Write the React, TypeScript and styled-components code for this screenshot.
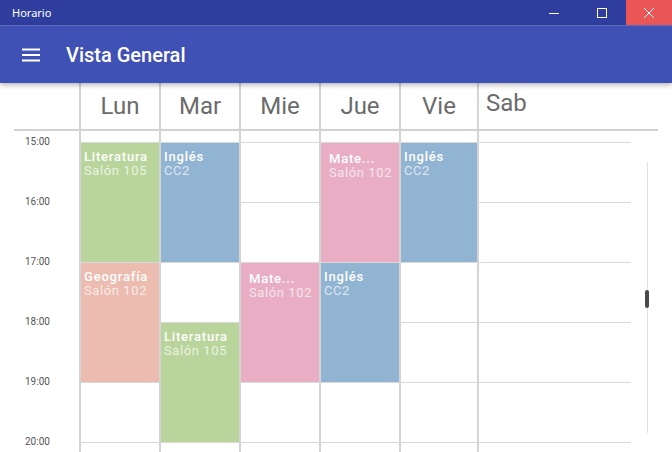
import styled, { createGlobalStyle } from "styled-components";

const GRID_COLUMNS = "79px 80px 80px 80px 80px 78px 1fr";

const GlobalStyle = createGlobalStyle`
  html, body {
    margin: 0;
    padding: 0;
    background: #ffffff;
  }
  body {
    font-family: Roboto, "Noto Sans", sans-serif;
    overflow: hidden;
  }
`;

const Window = styled.div`
  width: 672px;
  height: 452px;
  display: flex;
  flex-direction: column;
  overflow: hidden;
  background: #ffffff;
`;

const TitleBar = styled.div`
  height: 25px;
  flex-shrink: 0;
  display: flex;
  align-items: center;
  background: #2f3e9e;
  border-bottom: 1px solid #6472c6;
  color: #ffffff;
`;

const WindowTitle = styled.div`
  flex: 1;
  padding-left: 12px;
  font-family: "Noto Sans", "Open Sans", sans-serif;
  font-size: 11px;
`;

const WindowButton = styled.div<{ $width: number; $danger?: boolean }>`
  width: ${(p) => p.$width}px;
  height: 25px;
  display: flex;
  align-items: center;
  justify-content: center;
  background: ${(p) => (p.$danger ? "#ea5656" : "transparent")};
`;

const AppBar = styled.header`
  position: relative;
  z-index: 1;
  height: 57px;
  flex-shrink: 0;
  display: flex;
  align-items: center;
  gap: 26px;
  padding-left: 22px;
  background: #3f51b5;
  color: #ffffff;
  box-shadow: 0 2px 5px rgba(0, 0, 0, 0.3);
`;

const AppTitle = styled.h1`
  margin: 0;
  font-size: 20px;
  font-weight: 500;
  line-height: 24px;
`;

const Body = styled.main`
  flex: 1;
  display: flex;
  flex-direction: column;
`;

const ColumnsRow = styled.div<{ $height: number }>`
  display: grid;
  grid-template-columns: ${GRID_COLUMNS};
  height: ${(p) => p.$height}px;
  flex-shrink: 0;
`;

const DayCell = styled.div<{ $left?: boolean }>`
  border-left: 2px solid #d4d4d4;
  font-size: 24px;
  line-height: 28px;
  color: #6b6b6b;
  text-align: ${(p) => (p.$left ? "left" : "center")};
  padding: ${(p) => (p.$left ? "6px 0 0 7px" : "9px 0 0")};
`;

const ColumnLine = styled.div`
  border-left: 2px solid #d4d4d4;
`;

const Divider = styled.div`
  height: 2px;
  width: 644px;
  margin-left: 14px;
  flex-shrink: 0;
  background: #d2d2d2;
`;

const Content = styled.div`
  display: flex;
  flex-shrink: 0;
`;

const ScheduleGrid = styled.div`
  flex: 0 0 631px;
  display: grid;
  grid-template-columns: ${GRID_COLUMNS};
  grid-template-rows: repeat(6, 60px);
`;

const TimeLabel = styled.div<{ $row: number }>`
  grid-column: 1;
  grid-row: ${(p) => p.$row};
  margin-top: -6px;
  padding-left: 25px;
  font-size: 10px;
  line-height: 12px;
  color: #555555;
`;

const Slot = styled.div<{ $col: number; $row: number; $span: number }>`
  grid-column: ${(p) => p.$col};
  grid-row: ${(p) => p.$row} / span ${(p) => p.$span};
  border-left: 2px solid #d4d4d4;
  border-top: 1px solid #d9d9d9;
`;

const Lesson = styled.div<{ $color: string; $inset?: boolean }>`
  height: 100%;
  box-sizing: border-box;
  padding: ${(p) => (p.$inset ? "9px 0 0 8px" : "7px 3px 0")};
  background: ${(p) => p.$color};
  overflow: hidden;
`;

const LessonTitle = styled.div`
  font-size: 13px;
  line-height: 14px;
  font-weight: 500;
  letter-spacing: 0.8px;
  color: #ffffff;
  white-space: nowrap;
`;

const LessonRoom = styled.div`
  font-size: 13px;
  line-height: 14px;
  letter-spacing: 0.6px;
  color: rgba(255, 255, 255, 0.72);
  white-space: nowrap;
`;

const ScrollRail = styled.div`
  width: 4px;
  height: 271px;
  margin: 20px 0 0 14px;
  display: flex;
  flex-direction: column;
  background: linear-gradient(
    to right,
    transparent 2px,
    #e2e2e2 2px,
    #e2e2e2 3px,
    transparent 3px
  );
`;

const ScrollThumb = styled.div<{ $offset: number }>`
  margin-top: ${(p) => p.$offset}px;
  height: 18px;
  border-radius: 2px;
  background: #4a4a4a;
`;

const COLORS = {
  green: "#b9d59b",
  blue: "#91b4d3",
  pink: "#e9aec3",
  salmon: "#ebbcaf",
};

type LessonData = {
  day: number;
  start: number;
  span: number;
  title: string;
  room: string;
  color: string;
  inset?: boolean;
};

const days = ["Lun", "Mar", "Mie", "Jue", "Vie", "Sab"];
const hours = ["15:00", "16:00", "17:00", "18:00", "19:00", "20:00"];

const lessons: LessonData[] = [
  { day: 0, start: 0, span: 2, title: "Literatura", room: "Salón 105", color: COLORS.green },
  { day: 0, start: 2, span: 2, title: "Geografía", room: "Salón 102", color: COLORS.salmon },
  { day: 1, start: 0, span: 2, title: "Inglés", room: "CC2", color: COLORS.blue },
  { day: 1, start: 3, span: 2, title: "Literatura", room: "Salón 105", color: COLORS.green },
  { day: 2, start: 2, span: 2, title: "Mate...", room: "Salón 102", color: COLORS.pink, inset: true },
  { day: 3, start: 0, span: 2, title: "Mate...", room: "Salón 102", color: COLORS.pink, inset: true },
  { day: 3, start: 2, span: 2, title: "Inglés", room: "CC2", color: COLORS.blue },
  { day: 4, start: 0, span: 2, title: "Inglés", room: "CC2", color: COLORS.blue },
];

function buildSlots() {
  const slots = [];
  for (let d = 0; d < days.length; d++) {
    let h = 0;
    while (h < hours.length) {
      const lesson = lessons.find((l) => l.day === d && l.start === h);
      if (lesson) {
        slots.push(
          <Slot key={`${d}-${h}`} $col={d + 2} $row={h + 1} $span={lesson.span}>
            <Lesson $color={lesson.color} $inset={lesson.inset}>
              <LessonTitle>{lesson.title}</LessonTitle>
              <LessonRoom>{lesson.room}</LessonRoom>
            </Lesson>
          </Slot>
        );
        h += lesson.span;
      } else {
        slots.push(<Slot key={`${d}-${h}`} $col={d + 2} $row={h + 1} $span={1} />);
        h += 1;
      }
    }
  }
  return slots;
}

export default function App() {
  return (
    <Window>
      <GlobalStyle />
      <TitleBar>
        <WindowTitle>Horario</WindowTitle>
        <WindowButton $width={48}>
          <svg width="10" height="10" viewBox="0 0 10 10">
            <path d="M0 5.5h10" stroke="#fff" strokeWidth="1" />
          </svg>
        </WindowButton>
        <WindowButton $width={48}>
          <svg width="10" height="10" viewBox="0 0 10 10">
            <rect x="0.5" y="0.5" width="9" height="9" fill="none" stroke="#fff" strokeWidth="1" />
          </svg>
        </WindowButton>
        <WindowButton $width={46} $danger>
          <svg width="10" height="10" viewBox="0 0 10 10">
            <path d="M0 0L10 10M10 0L0 10" stroke="#fff" strokeWidth="1" />
          </svg>
        </WindowButton>
      </TitleBar>

      <AppBar>
        <svg width="18" height="14" viewBox="0 0 18 14">
          <rect x="0" y="0.5" width="18" height="2" fill="#fff" />
          <rect x="0" y="6" width="18" height="2" fill="#fff" />
          <rect x="0" y="11.5" width="18" height="2" fill="#fff" />
        </svg>
        <AppTitle>Vista General</AppTitle>
      </AppBar>

      <Body>
        <ColumnsRow $height={46}>
          <div />
          {days.map((day) => (
            <DayCell key={day} $left={day === "Sab"}>
              {day}
            </DayCell>
          ))}
        </ColumnsRow>
        <Divider />
        <ColumnsRow $height={11}>
          <div />
          {days.map((day) => (
            <ColumnLine key={day} />
          ))}
        </ColumnsRow>
        <Content>
          <ScheduleGrid>
            {hours.map((hour, i) => (
              <TimeLabel key={hour} $row={i + 1}>
                {hour}
              </TimeLabel>
            ))}
            {buildSlots()}
          </ScheduleGrid>
          <ScrollRail>
            <ScrollThumb $offset={128} />
          </ScrollRail>
        </Content>
      </Body>
    </Window>
  );
}
